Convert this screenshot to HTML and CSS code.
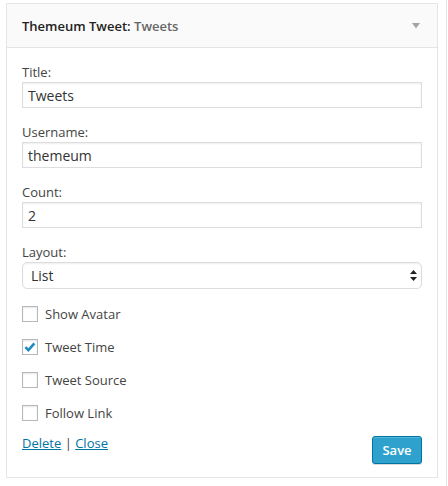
FILE: index.html
```html
<!DOCTYPE html>
<html>
<head>
<meta charset="utf-8">
<link rel="stylesheet" href="styles.css">
</head>
<body>
<div class="page">
  <div class="widget">
    <div class="widget-top">
      <h4 class="widget-title">Themeum Tweet: <span class="in-title">Tweets</span></h4>
      <svg class="toggle" width="8" height="6" viewBox="0 0 8 6"><path d="M0 0H8L4 5.5Z" fill="#a0a5aa"/></svg>
    </div>
    <div class="widget-inside">
      <p class="field">
        <label class="lbl">Title:</label>
        <input class="text" type="text" value="Tweets">
      </p>
      <p class="field">
        <label class="lbl">Username:</label>
        <input class="text" type="text" value="themeum">
      </p>
      <p class="field">
        <label class="lbl">Count:</label>
        <input class="text" type="text" value="2">
      </p>
      <p class="field">
        <label class="lbl">Layout:</label>
        <span class="select-wrap">
          <select class="select"><option>List</option></select>
          <svg class="select-arrows" width="7" height="11" viewBox="0 0 7 11"><path d="M3.5 0L7 4H0Z M0 7H7L3.5 11Z" fill="#222"/></svg>
        </span>
      </p>
      <div class="checks">
        <label class="check"><span class="box"></span>Show Avatar</label>
        <label class="check"><span class="box"><svg width="14" height="14" viewBox="0 0 14 14"><path d="M2.4 7.2L5.4 10.2L11.4 3.4" fill="none" stroke="#1e8cbe" stroke-width="2.6"/></svg></span>Tweet Time</label>
        <label class="check"><span class="box"></span>Tweet Source</label>
        <label class="check"><span class="box"></span>Follow Link</label>
      </div>
      <div class="controls">
        <div class="links"><a href="#">Delete</a> | <a href="#">Close</a></div>
        <button class="save">Save</button>
      </div>
    </div>
  </div>
</div>
</body>
</html>
```
FILE: styles.css
```css
html, body {
  margin: 0;
  padding: 0;
  background: #fff;
}
body {
  font-family: "Open Sans", "DejaVu Sans", sans-serif;
  font-size: 13px;
  color: #444;
}
.page {
  width: 447px;
  height: 486px;
  box-sizing: border-box;
  border-right: 1px solid #e5e5e5;
  padding: 3px 0 0 6px;
}
.widget {
  width: 432px;
  box-sizing: border-box;
  border: 1px solid #e5e5e5;
  background: #fff;
}
.widget-top {
  height: 43px;
  background: #fafafa;
  border-bottom: 1px solid #e5e5e5;
  display: flex;
  align-items: center;
  justify-content: space-between;
  padding: 0 17px 0 15px;
}
.widget-title {
  margin: 0;
  font-size: 13px;
  font-weight: 600;
  color: #222;
  line-height: 18px;
}
.in-title {
  color: #666;
}
.toggle {
  display: block;
  margin-top: 1px;
}
.widget-inside {
  padding: 15px 15px 13px;
}
.field {
  margin: 0 0 15px;
}
.lbl {
  display: block;
  line-height: 18px;
  margin-bottom: 1px;
  color: #444;
}
.text {
  display: block;
  width: 100%;
  height: 26px;
  box-sizing: border-box;
  margin: 0;
  border: 1px solid #ddd;
  box-shadow: inset 0 1px 2px rgba(0,0,0,.07);
  padding: 0 5px;
  font-family: "Open Sans", "DejaVu Sans", sans-serif;
  font-size: 14px;
  color: #333;
  background: #fff;
  outline: none;
}
.select-wrap {
  display: block;
  position: relative;
}
.select {
  display: block;
  width: 100%;
  height: 27px;
  box-sizing: border-box;
  margin: 0;
  -webkit-appearance: none;
  appearance: none;
  border: 1px solid #ddd;
  border-radius: 5px;
  background: #fff;
  box-shadow: inset 0 1px 2px rgba(0,0,0,.07);
  padding: 0 8px;
  font-family: "Open Sans", "DejaVu Sans", sans-serif;
  font-size: 14px;
  color: #333;
}
.select-arrows {
  position: absolute;
  right: 5px;
  top: 8px;
}
.checks {
  display: flex;
  flex-direction: column;
  gap: 13px;
  margin-top: 0;
}
.check {
  display: flex;
  align-items: center;
  height: 20px;
  color: #444;
}
.box {
  width: 16px;
  height: 16px;
  box-sizing: border-box;
  border: 1px solid #b4b9be;
  background: #fff;
  box-shadow: inset 0 1px 2px rgba(0,0,0,.1);
  margin-right: 7px;
  display: flex;
  align-items: center;
  justify-content: center;
}
.box svg {
  display: block;
}
.controls {
  display: flex;
  justify-content: space-between;
  align-items: flex-start;
  margin-top: 11px;
}
.links {
  line-height: 18px;
  color: #444;
}
.links a {
  color: #0074a2;
  text-decoration: underline;
}
.save {
  margin-top: 2px;
  width: 50px;
  height: 28px;
  box-sizing: border-box;
  background: #2ea2cc;
  border: 1px solid #0074a2;
  border-radius: 3px;
  box-shadow: inset 0 1px 0 rgba(120,200,230,.5), 0 1px 0 rgba(0,0,0,.15);
  color: #fff;
  font-family: "Open Sans", "DejaVu Sans", sans-serif;
  font-size: 13px;
  font-weight: 600;
  padding: 0;
  cursor: pointer;
}
```
